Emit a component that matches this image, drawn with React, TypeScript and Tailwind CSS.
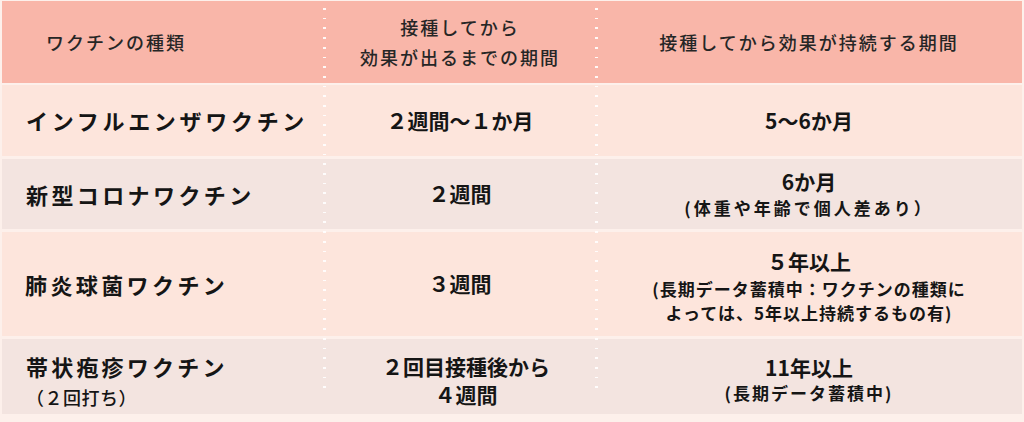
import React from "react";

const font = { fontFamily: '"Noto Sans CJK JP", "Noto Sans", sans-serif' };

export default function App() {
  return (
    <div
      className="relative w-[1024px] h-[422px] bg-[#fdf0eb] px-[2px] pt-[1px] text-[#151515] overflow-hidden"
      style={font}
    >
      <div className="flex flex-col">
        {/* header */}
        <div className="grid grid-cols-[322px_272px_426px] h-[82px] bg-[#f9b6a9] text-[18px] font-medium text-[#262626] tracking-[2px]">
          <div className="flex items-center pl-[44px]">ワクチンの種類</div>
          <div className="flex flex-col items-center justify-center leading-[30px] text-center">
            <span>接種してから</span>
            <span>効果が出るまでの期間</span>
          </div>
          <div className="flex items-center justify-center">接種してから効果が持続する期間</div>
        </div>

        {/* row 1 */}
        <div className="mt-[2px] grid grid-cols-[322px_272px_426px] h-[71px] bg-[#fde5dc] font-bold">
          <div className="flex items-center pl-[24px] text-[22px] tracking-[3.7px]">インフルエンザワクチン</div>
          <div className="flex items-center justify-center text-[21px]">２週間～１か月</div>
          <div className="flex items-center justify-center text-[21px]">5～6か月</div>
        </div>

        {/* row 2 */}
        <div className="mt-[3px] grid grid-cols-[322px_272px_426px] h-[70px] bg-[#f3e4e0] font-bold">
          <div className="flex items-center pl-[24px] text-[22px] tracking-[3.4px]">新型コロナワクチン</div>
          <div className="flex items-center justify-center text-[21px]">２週間</div>
          <div className="flex flex-col items-center justify-center">
            <span className="text-[21px] leading-[28px]">6か月</span>
            <span className="text-[17px] leading-[26px] tracking-[3px]">(体重や年齢で個人差あり）</span>
          </div>
        </div>

        {/* row 3 */}
        <div className="mt-[3px] grid grid-cols-[322px_272px_426px] h-[104px] bg-[#fde5dc] font-bold">
          <div className="flex items-center pl-[23px] text-[22px] tracking-[3.4px]">肺炎球菌ワクチン</div>
          <div className="flex items-center justify-center text-[21px]">３週間</div>
          <div className="flex flex-col items-center justify-center pt-[2px]">
            <span className="text-[21px] leading-[30px]">５年以上</span>
            <span className="text-[17px] leading-[25px] tracking-[1px]">(長期データ蓄積中：ワクチンの種類に</span>
            <span className="text-[17px] leading-[24px] tracking-[1px]">よっては、5年以上持続するもの有)</span>
          </div>
        </div>

        {/* row 4 */}
        <div className="mt-[3px] grid grid-cols-[322px_272px_426px] h-[75px] bg-[#f3e4e0] font-bold">
          <div className="flex flex-col justify-center pl-[24px] pt-[8px]">
            <span className="text-[22px] leading-[32px] tracking-[3.2px]">帯状疱疹ワクチン</span>
            <span className="text-[18px] leading-[30px] font-medium tracking-[0.5px]">（２回打ち）</span>
          </div>
          <div className="flex flex-col items-center justify-center pt-[6px] pl-[12px] text-[21px] leading-[28px]">
            <span>２回目接種後から</span>
            <span>４週間</span>
          </div>
          <div className="flex flex-col items-center justify-center pt-[6px]">
            <span className="text-[21px] leading-[26px]">11年以上</span>
            <span className="text-[17px] leading-[26px] tracking-[2px]">(長期データ蓄積中)</span>
          </div>
        </div>
      </div>

      {/* dotted dividers */}
      <div className="absolute left-[323px] top-0 h-[392px] w-[3px] bg-[image:repeating-linear-gradient(to_bottom,transparent_0px,transparent_8px,#ffffff_8px,#ffffff_9.7px)] opacity-90" />
      <div className="absolute left-[595px] top-0 h-[392px] w-[3px] bg-[image:repeating-linear-gradient(to_bottom,transparent_0px,transparent_8px,#ffffff_8px,#ffffff_9.7px)] opacity-90" />
    </div>
  );
}
